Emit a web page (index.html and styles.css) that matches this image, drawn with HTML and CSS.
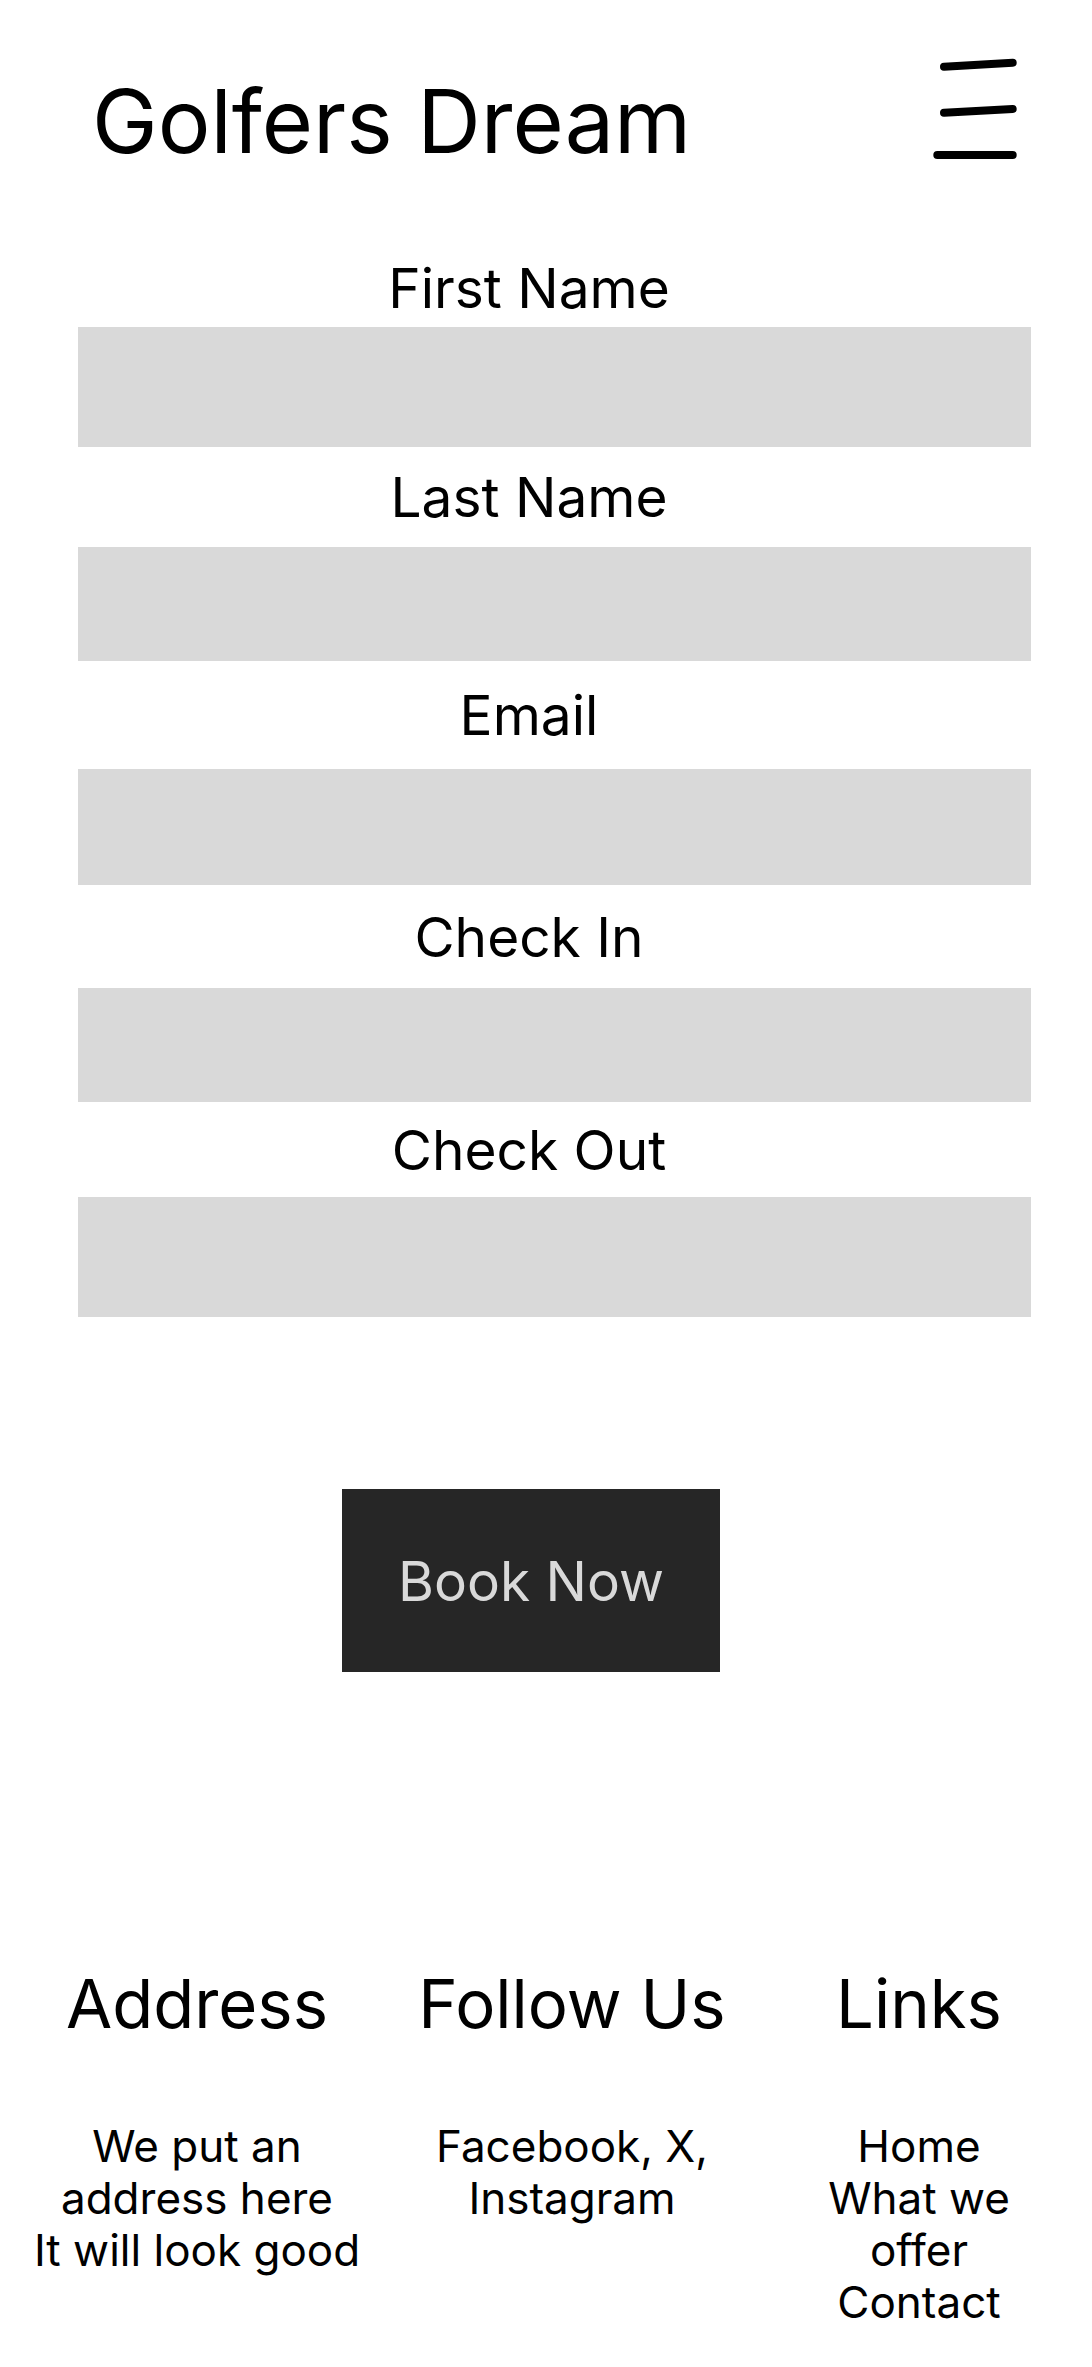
FILE: index.html
```html
<!DOCTYPE html>
<html lang="en">
<head>
<meta charset="utf-8">
<title>Golfers Dream</title>
<link rel="stylesheet" href="styles.css">
</head>
<body>
<header class="site-header">
  <h1 class="brand">Golfers Dream</h1>
  <button class="menu-btn" type="button" aria-label="Menu">
    <svg class="menu-icon" width="100" height="110" viewBox="0 0 100 110">
      <g stroke="#000" stroke-width="8" stroke-linecap="round" fill="none">
        <line x1="19" y1="14.7" x2="87.7" y2="10.7"/>
        <line x1="19" y1="60.7" x2="87.7" y2="57"/>
        <line x1="12.3" y1="103" x2="87.7" y2="103"/>
      </g>
    </svg>
  </button>
</header>
<main class="booking">
  <form class="booking-form">
    <div class="field-group">
      <label class="field-label" for="first">First Name</label>
      <input class="field-input" id="first" type="text">
    </div>
    <div class="field-group">
      <label class="field-label" for="last">Last Name</label>
      <input class="field-input" id="last" type="text">
    </div>
    <div class="field-group">
      <label class="field-label" for="email">Email</label>
      <input class="field-input" id="email" type="text">
    </div>
    <div class="field-group">
      <label class="field-label" for="checkin">Check In</label>
      <input class="field-input" id="checkin" type="text">
    </div>
    <div class="field-group">
      <label class="field-label" for="checkout">Check Out</label>
      <input class="field-input" id="checkout" type="text">
    </div>
    <div class="actions">
      <button class="book-btn" type="button">Book Now</button>
    </div>
  </form>
</main>
<footer class="site-footer">
  <section class="footer-col">
    <h2 class="footer-title">Address</h2>
    <p class="footer-text">We put an<br>address here<br>It will look good</p>
  </section>
  <section class="footer-col">
    <h2 class="footer-title">Follow Us</h2>
    <p class="footer-text">Facebook, X,<br>Instagram</p>
  </section>
  <section class="footer-col">
    <h2 class="footer-title">Links</h2>
    <p class="footer-text">Home<br>What we<br>offer<br>Contact</p>
  </section>
</footer>
</body>
</html>
```

FILE: styles.css
```css
* {
  box-sizing: border-box;
}

html, body {
  margin: 0;
  padding: 0;
  background: #ffffff;
}

body {
  font-family: Inter, "Noto Sans", "DejaVu Sans", sans-serif;
  color: #000000;
  width: 1092px;
  min-height: 2367px;
}

.site-header {
  display: flex;
  justify-content: space-between;
  align-items: flex-start;
  padding: 52px 67px 0 92px;
}

.brand {
  margin: 0;
  padding-top: 16px;
  font-size: 88px;
  line-height: 106px;
  font-weight: 400;
}

.menu-btn {
  padding: 0;
  margin: 0;
  border: 0;
  background: none;
  display: block;
  line-height: 0;
}

.menu-icon {
  display: block;
}

.booking-form {
  padding: 74px 61px 0 78px;
  margin: 0;
}

.field-label {
  display: flex;
  align-items: center;
  justify-content: center;
  margin-right: 51px;
  height: 100px;
  font-size: 55px;
  line-height: 64px;
}

.field-input {
  display: block;
  width: 100%;
  height: 114px;
  border: 0;
  border-radius: 0;
  margin: 0;
  background: #d9d9d9;
  font: inherit;
}

.field-group:nth-child(1) .field-label { height: 79px; }
.field-group:nth-child(1) .field-input { height: 120px; }
.field-group:nth-child(2) .field-label { height: 100px; }
.field-group:nth-child(2) .field-input { height: 114px; }
.field-group:nth-child(3) .field-label { height: 108px; }
.field-group:nth-child(3) .field-input { height: 116px; }
.field-group:nth-child(4) .field-label { height: 103px; }
.field-group:nth-child(4) .field-input { height: 114px; }
.field-group:nth-child(5) .field-label { height: 95px; }
.field-group:nth-child(5) .field-input { height: 120px; }

.actions {
  display: flex;
  justify-content: center;
  margin: 172px -61px 0 -78px;
  padding-right: 30px;
}

.book-btn {
  width: 378px;
  height: 183px;
  border: 0;
  border-radius: 0;
  background: #262626;
  color: #d9d9d9;
  font-family: Inter, "Noto Sans", "DejaVu Sans", sans-serif;
  font-size: 55px;
  line-height: 66px;
  font-weight: 400;
  display: flex;
  align-items: center;
  justify-content: center;
  padding: 0;
}

.site-footer {
  display: grid;
  grid-template-columns: 394px 356px 338px;
  margin-top: 292px;
  text-align: center;
}

.footer-title {
  margin: 0 0 76px;
  font-size: 67px;
  line-height: 80px;
  font-weight: 400;
}

.footer-text {
  margin: 0;
  font-size: 44px;
  line-height: 52px;
}
```
